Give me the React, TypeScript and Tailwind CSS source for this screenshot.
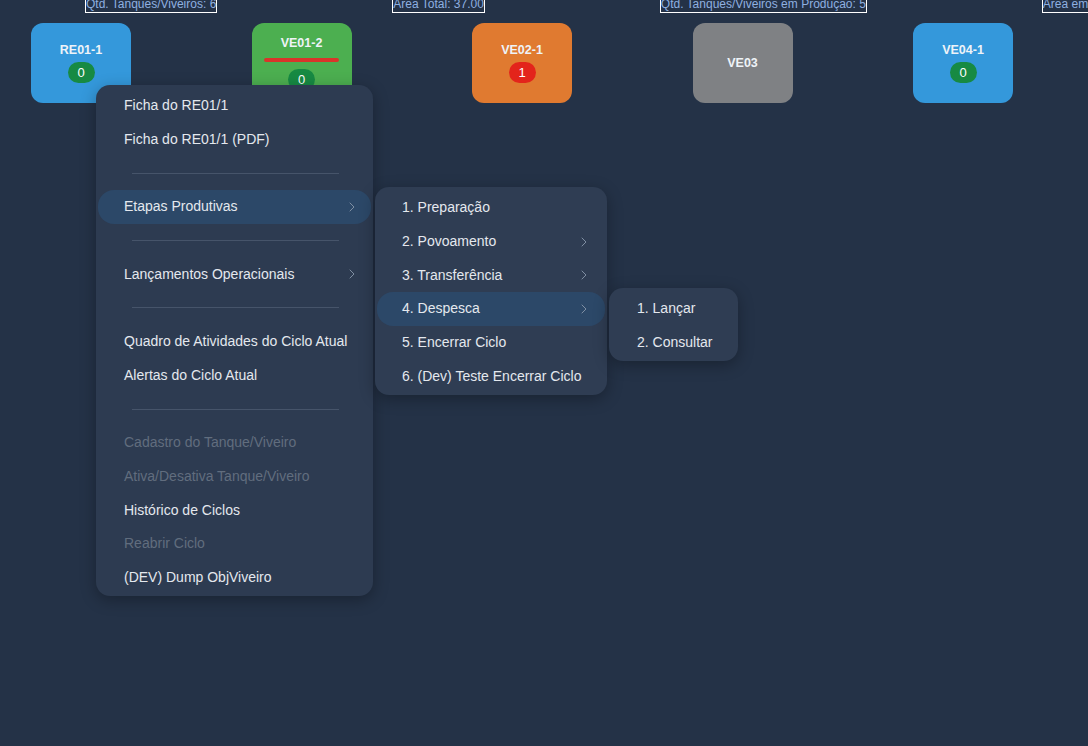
import React from 'react';
import { ChevronRight } from 'lucide-react';

type Tank = { id: string; color: string; badge?: { value: number; color: string }; bar?: boolean };

const tanks: Tank[] = [
  { id: 'RE01-1', color: 'bg-[#3498db]', badge: { value: 0, color: 'bg-[#178a43]' } },
  { id: 'VE01-2', color: 'bg-[#4caf50]', badge: { value: 0, color: 'bg-[#178a43]' }, bar: true },
  { id: 'VE02-1', color: 'bg-[#e07a30]', badge: { value: 1, color: 'bg-[#e3241b]' } },
  { id: 'VE03', color: 'bg-[#7f8184]' },
  { id: 'VE04-1', color: 'bg-[#3498db]', badge: { value: 0, color: 'bg-[#178a43]' } },
];

const stats = [
  'Qtd. Tanques/Viveiros: 6',
  'Área Total: 37.00',
  'Qtd. Tanques/Viveiros em Produção: 5',
  'Área em Produção: 32.00',
];

type Item = { label?: string; sep?: boolean; sub?: boolean; active?: boolean; disabled?: boolean };

const mainMenu: Item[] = [
  { label: 'Ficha do RE01/1' },
  { label: 'Ficha do RE01/1 (PDF)' },
  { sep: true },
  { label: 'Etapas Produtivas', sub: true, active: true },
  { sep: true },
  { label: 'Lançamentos Operacionais', sub: true },
  { sep: true },
  { label: 'Quadro de Atividades do Ciclo Atual' },
  { label: 'Alertas do Ciclo Atual' },
  { sep: true },
  { label: 'Cadastro do Tanque/Viveiro', disabled: true },
  { label: 'Ativa/Desativa Tanque/Viveiro', disabled: true },
  { label: 'Histórico de Ciclos' },
  { label: 'Reabrir Ciclo', disabled: true },
  { label: '(DEV) Dump ObjViveiro' },
];

const etapas: Item[] = [
  { label: '1. Preparação' },
  { label: '2. Povoamento', sub: true },
  { label: '3. Transferência', sub: true },
  { label: '4. Despesca', sub: true, active: true },
  { label: '5. Encerrar Ciclo' },
  { label: '6. (Dev) Teste Encerrar Ciclo' },
];

const despesca: Item[] = [{ label: '1. Lançar' }, { label: '2. Consultar' }];

const MenuList: React.FC<{ items: Item[]; pl: string; pr: string }> = ({ items, pl, pr }) => (
  <div className="pt-[4px] pb-[2px] px-[2px]">
    {items.map((item, i) =>
      item.sep ? (
        <div key={i} className="h-[33.7px] flex items-center pl-[34px] pr-[32px]">
          <div className="h-px w-full bg-[#46546a]" />
        </div>
      ) : (
        <div
          key={i}
          className={`h-[33.7px] flex items-center justify-between rounded-2xl ${pl} ${pr} ${
            item.active ? 'bg-[#2c4868]' : ''
          } ${item.disabled ? 'text-[#616d7e]' : 'text-[#e4e8ee]'}`}
        >
          <span>{item.label}</span>
          {item.sub && <ChevronRight size={16} strokeWidth={1.4} className="text-[#8594a8]" />}
        </div>
      )
    )}
  </div>
);

const App: React.FC = () => {
  return (
    <div
      className="relative w-full h-screen min-h-[746px] overflow-hidden bg-[#243247]"
      style={{ fontFamily: '"Liberation Sans", Arial, sans-serif' }}
    >
      {/* stats row */}
      <div className="flex gap-[175px] pl-[85px] -mt-[4px] whitespace-nowrap">
        {stats.map(s => (
          <div key={s} className="border border-white text-[12px] leading-[15px] text-[#8fb0e0] shrink-0">
            {s}
          </div>
        ))}
      </div>

      {/* tanks */}
      <div className="flex gap-[120.5px] pl-[31px] mt-[10px]">
        {tanks.map(t => (
          <div
            key={t.id}
            className={`w-[100px] h-[80px] shrink-0 rounded-xl ${t.color} flex flex-col items-center justify-center gap-[4px]`}
          >
            <span className="text-[12.5px] leading-[15px] font-bold text-[#eef3f8]">{t.id}</span>
            {t.bar && <div className="w-[75px] h-[4px] rounded-full bg-[#d9352a] my-[3px]" />}
            {t.badge && (
              <span
                className={`w-[27px] h-[21px] rounded-full ${t.badge.color} text-[13px] text-white flex items-center justify-center`}
              >
                {t.badge.value}
              </span>
            )}
          </div>
        ))}
      </div>

      {/* context menu */}
      <div className="absolute left-[96px] top-[85px] w-[277px] rounded-[14px] bg-[#2d3b51] text-[14px] shadow-[0_4px_16px_rgba(0,0,0,0.3)]">
        <MenuList items={mainMenu} pl="pl-[26px]" pr="pr-[11px]" />
      </div>

      <div className="absolute left-[375px] top-[187px] w-[232px] rounded-[14px] bg-[#2f3d53] text-[14px] shadow-[0_4px_16px_rgba(0,0,0,0.3)]">
        <MenuList items={etapas} pl="pl-[25px]" pr="pr-[13px]" />
      </div>

      <div className="absolute left-[609px] top-[288px] w-[129px] rounded-[14px] bg-[#2f3d53] text-[14px] shadow-[0_4px_16px_rgba(0,0,0,0.3)]">
        <MenuList items={despesca} pl="pl-[26px]" pr="pr-[12px]" />
      </div>
    </div>
  );
};

export default App;
